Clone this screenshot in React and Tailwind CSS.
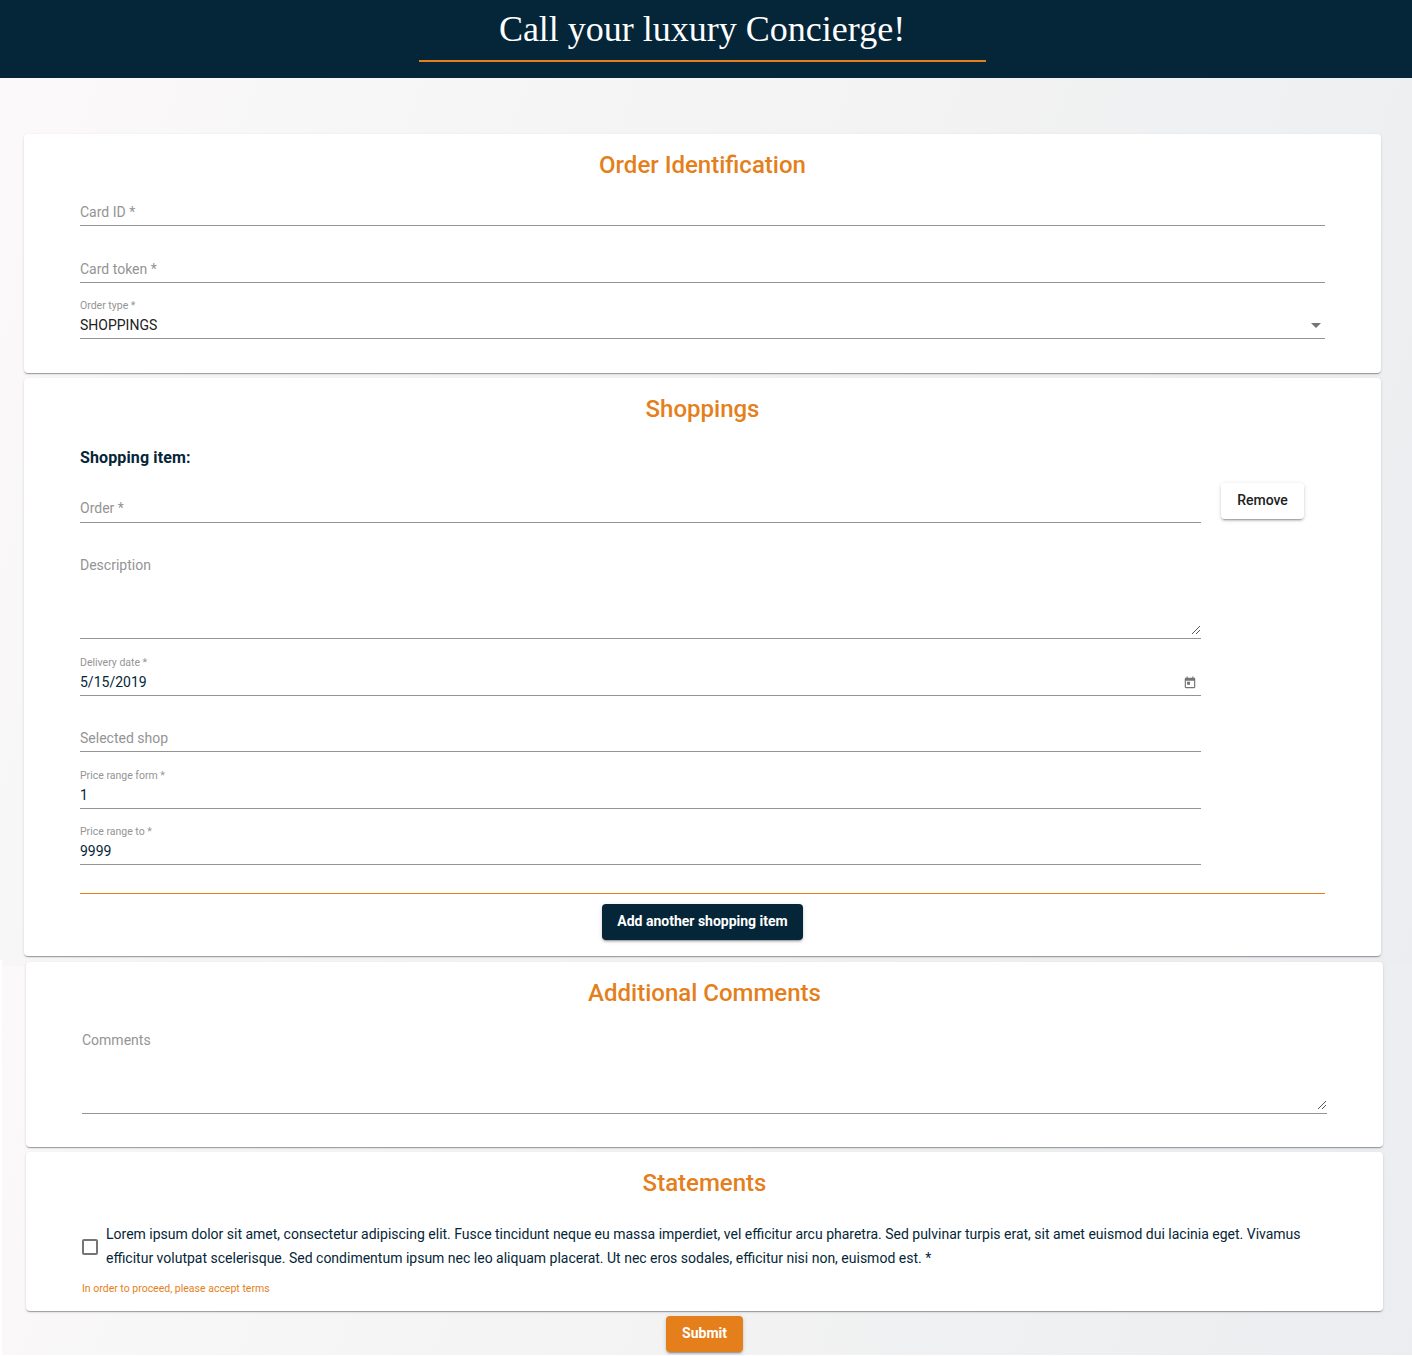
const cardShadow =
  "shadow-[0_2px_1px_-1px_rgba(0,0,0,0.2),0_1px_1px_0_rgba(0,0,0,0.14),0_1px_3px_0_rgba(0,0,0,0.12)]";
const buttonShadow =
  "shadow-[0_3px_1px_-2px_rgba(0,0,0,0.2),0_2px_2px_0_rgba(0,0,0,0.14),0_1px_5px_0_rgba(0,0,0,0.12)]";
const backdrop = "bg-linear-110 from-[#fbf9fa] via-[#f3f3f3] to-[#ebedf0]";

function Card({ title, className = "", children }) {
  return (
    <section className={`w-[1357px] rounded bg-white px-14 pt-4 ${cardShadow} ${className}`}>
      <h2 className="text-center text-2xl leading-[30px] font-medium text-[#e47f1b]">{title}</h2>
      {children}
    </section>
  );
}

/* Underlined input; `value` puts a small label above the filled text. */
function Field({ label, value, icon, valueColor = "text-[#052638]", labelGap = "mb-[5px]", className = "h-[57px]" }) {
  return (
    <div className={`flex flex-col justify-end border-b border-[#949494] ${className}`}>
      {value ? (
        <>
          <span className="text-[10.5px] leading-3 text-[#949494]">{label}</span>
          <div className="mt-[5px] flex h-[21px] items-start justify-between">
            <span className={`text-sm leading-4 ${valueColor}`}>{value}</span>
            {icon}
          </div>
        </>
      ) : (
        <span className={`text-sm leading-4 text-[#949494] ${labelGap}`}>{label}</span>
      )}
    </div>
  );
}

function Area({ label, className = "" }) {
  return (
    <div className={`flex justify-between border-b border-[#949494] ${className}`}>
      <span className="text-sm leading-4 text-[#949494]">{label}</span>
      <svg className="mb-[3px] self-end" width="10" height="10" viewBox="0 0 10 10" shapeRendering="crispEdges" stroke="#555" fill="none">
        <path d="M1 9 9 1M5 9 9 5" />
      </svg>
    </div>
  );
}

function Caret() {
  return (
    <svg className="mt-[6px] mr-1" width="10" height="5" viewBox="0 0 10 5" fill="#757575">
      <path d="M0 0h10L5 5z" />
    </svg>
  );
}

function Calendar() {
  return (
    <svg className="mt-0.5 mr-1" width="14" height="14" viewBox="0 0 24 24" fill="#757575">
      <path d="M19 3h-1V1h-2v2H8V1H6v2H5c-1.11 0-1.99.9-1.99 2L3 19c0 1.1.89 2 2 2h14c1.1 0 2-.9 2-2V5c0-1.1-.9-2-2-2zm0 16H5V8h14v11zM7 10h5v5H7z" />
    </svg>
  );
}

export default function App() {
  return (
    <div className="h-[1356px] w-[1412px] overflow-hidden bg-white font-[Roboto,sans-serif]">
      <header className="flex h-[78px] justify-center bg-[#052638] pr-[7px]">
        <div className="flex h-[62px] w-[567px] justify-center border-b-2 border-[#e47f1b]">
          <h1 className="pt-[7px] pr-px font-['Liberation_Serif',serif] text-4xl leading-[44px] whitespace-nowrap text-white">
            Call your luxury Concierge!
          </h1>
        </div>
      </header>

      <div className={`h-[888px] pt-14 pl-6 ${backdrop}`}>
        <Card title="Order Identification" className="h-[239px]">
          <Field label="Card ID *" className="h-[46px]" />
          <Field label="Card token *" />
          <Field label="Order type *" value="SHOPPINGS" valueColor="text-[#212121]" icon={<Caret />} className="h-14" />
        </Card>

        <Card title="Shoppings" className="mt-[5px] h-[578px]">
          <h3 className="mt-6 text-base leading-5 font-bold tracking-[0.13px] text-[#052638]">Shopping item:</h3>
          <div className="-mt-px flex">
            <div className="w-[1121px]">
              <Field label="Order *" labelGap="mb-1.5" className="h-14" />
              <Area label="Description" className="h-[116px] pt-[34px]" />
              <Field label="Delivery date *" value="5/15/2019" icon={<Calendar />} />
              <Field label="Selected shop" className="h-14" />
              <Field label="Price range form *" value="1" />
              <Field label="Price range to *" value="9999" className="h-14" />
            </div>
            <button className={`mt-4 ml-5 h-9 w-[83px] rounded bg-white pb-0.5 text-sm font-medium text-[#212121] ${buttonShadow}`}>
              Remove
            </button>
          </div>
          <hr className="mt-7 border-[#e47f1b]" />
          <div className="mt-2.5 flex justify-center">
            <button className={`h-9 w-[201px] rounded bg-[#052638] pb-0.5 text-sm font-bold whitespace-nowrap text-white ${buttonShadow}`}>
              Add another shopping item
            </button>
          </div>
        </Card>
      </div>

      <div className={`-mt-1.5 h-[395px] border-l-2 border-white bg-[position:0_6px] bg-no-repeat pt-0.5 pl-6 ${backdrop}`}>
        <Card title="Additional Comments" className="h-[185px]">
          <Area label="Comments" className="h-[106px] pt-6" />
        </Card>

        <Card title="Statements" className="mt-[5px] h-[159px]">
          <label className="mt-6 flex items-center gap-2">
            <span className="mt-[2px] size-4 shrink-0 rounded-xs border-2 border-[#757575]" />
            <span className="text-sm leading-6 text-[#052638]">
              Lorem ipsum dolor sit amet, consectetur adipiscing elit. Fusce tincidunt neque eu massa imperdiet, vel
              efficitur arcu pharetra. Sed pulvinar turpis erat, sit amet euismod dui lacinia eget. Vivamus efficitur
              volutpat scelerisque. Sed condimentum ipsum nec leo aliquam placerat. Ut nec eros sodales, efficitur nisi
              non, euismod est. *
            </span>
          </label>
          <p className="mt-[13px] text-[10.5px] leading-3 text-[#e47f1b]">In order to proceed, please accept terms</p>
        </Card>

        <div className="mt-[5px] flex w-[1357px] justify-center">
          <button className={`h-9 w-[77px] rounded bg-[#e47f1b] pb-0.5 text-sm font-bold text-white ${buttonShadow}`}>
            Submit
          </button>
        </div>
      </div>
    </div>
  );
}
